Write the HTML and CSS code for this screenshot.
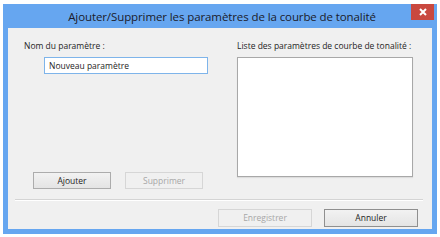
FILE: index.html
```html
<!DOCTYPE html>
<html lang="fr">
<head>
<meta charset="utf-8">
<link rel="stylesheet" href="styles.css">
</head>
<body>
<div class="window">
  <div class="titlebar">
    <span class="title">Ajouter/Supprimer les paramètres de la courbe de tonalité</span>
    <span class="close"><svg width="8" height="8" viewBox="0 0 8 8"><path d="M1 1L7 7M7 1L1 7" stroke="#fff" stroke-width="2"/></svg></span>
  </div>
  <div class="client">
    <div class="top">
      <div class="col-left">
        <div class="label">Nom du paramètre :</div>
        <div class="input">Nouveau paramètre</div>
        <div class="row-btns">
          <div class="btn">Ajouter</div>
          <div class="btn disabled">Supprimer</div>
        </div>
      </div>
      <div class="col-right">
        <div class="label">Liste des paramètres de courbe de tonalité :</div>
        <div class="listbox"></div>
      </div>
    </div>
    <div class="separator"></div>
    <div class="footer">
      <div class="btn wide disabled">Enregistrer</div>
      <div class="btn wide default">Annuler</div>
    </div>
  </div>
</div>
</body>
</html>
```

FILE: styles.css
```css
html, body {
  margin: 0;
  padding: 0;
  background: #ffffff;
}
body {
  font-family: "Open Sans", "DejaVu Sans", sans-serif;
  color: #1e1e1e;
}
.window {
  width: 424px;
  height: 225px;
  margin: 4px 0 0 3px;
  padding: 0 5px 5px 5px;
  background: #66a6f0;
  display: flex;
  flex-direction: column;
}
.titlebar {
  height: 24px;
  position: relative;
  display: flex;
  align-items: center;
  justify-content: center;
  flex: none;
}
.title {
  font-size: 11.5px;
  color: #1b1b2a;
  letter-spacing: -0.1px;
  margin-left: 4px;
}
.close {
  position: absolute;
  top: 0;
  right: -2px;
  width: 23px;
  height: 16px;
  background: #c9483f;
  display: flex;
  align-items: center;
  justify-content: center;
}
.client {
  flex: 1;
  background: #f0f0f0;
  display: flex;
  flex-direction: column;
}
.top {
  display: flex;
  padding-top: 12px;
  height: 152px;
}
.col-left {
  width: 229px;
  padding-left: 16px;
  box-sizing: border-box;
  display: flex;
  flex-direction: column;
}
.col-right {
  display: flex;
  flex-direction: column;
}
.label {
  font-size: 8.5px;
  height: 12px;
  line-height: 12px;
  white-space: nowrap;
}
.input {
  margin-top: 5px;
  margin-left: 20px;
  width: 164px;
  height: 17px;
  box-sizing: border-box;
  border: 1px solid #7eb4ea;
  background: #ffffff;
  font-size: 8.5px;
  line-height: 15px;
  padding-left: 4px;
}
.row-btns {
  display: flex;
  gap: 14px;
  margin-top: auto;
  margin-left: 9px;
  margin-bottom: 3px;
}
.listbox {
  margin-top: 5px;
  width: 176px;
  height: 120px;
  box-sizing: border-box;
  border: 1px solid #a8a8a8;
  background: #ffffff;
  box-shadow: 0 1px 1px rgba(0,0,0,0.08);
}
.btn {
  width: 78px;
  height: 17px;
  box-sizing: border-box;
  border: 1px solid #acacac;
  background: linear-gradient(#f2f2f2, #e4e4e4);
  font-size: 8.5px;
  line-height: 15px;
  text-align: center;
  color: #1e1e1e;
}
.btn.disabled {
  border-color: #d6d6d6;
  background: #f0f0f0;
  color: #a7a7a7;
}
.btn.wide {
  width: 94px;
  height: 18px;
  line-height: 16px;
}
.btn.default {
  border-color: #8f8f8f;
}
.separator {
  margin: 7px 9px 0 7px;
  height: 1px;
  background: #d4d4d4;
  border-bottom: 1px solid #ffffff;
}
.footer {
  display: flex;
  justify-content: flex-end;
  gap: 12px;
  padding: 8px 14px 0 0;
}
```
